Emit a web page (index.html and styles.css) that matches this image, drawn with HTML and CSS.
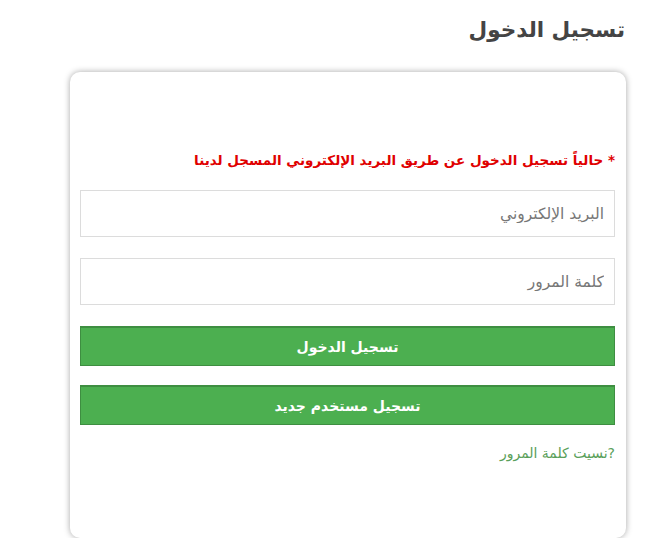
FILE: index.html
```html
<!DOCTYPE html>
<html lang="ar" dir="rtl">
<head>
    <meta charset="UTF-8">
    <meta name="viewport" content="width=device-width, initial-scale=1.0">
    <title>تسجيل الدخول</title>
    <link rel="stylesheet" href="styles.css">
</head>
<body>
    <div class="page">
        <h1 class="page-title">تسجيل الدخول</h1>
        <div class="login-box">
            <p class="notice">* حالياً تسجيل الدخول عن طريق البريد الإلكتروني المسجل لدينا</p>
            <form id="login-form" class="login-form">
                <input type="email" id="email" placeholder="البريد الإلكتروني">
                <input type="password" id="password" placeholder="كلمة المرور">
                <button type="submit">تسجيل الدخول</button>
                <button type="button">تسجيل مستخدم جديد</button>
            </form>
            <a href="#" class="forgot">?نسيت كلمة المرور</a>
        </div>
    </div>
</body>
</html>
```

FILE: styles.css
```css
body {
    margin: 0;
    background: #fff;
    font-family: "DejaVu Sans", "Noto Sans", sans-serif;
}

.page {
    width: 556px;
    margin-right: 44px;
    padding-top: 14px;
}

.page-title {
    margin: 0 1px 0 0;
    font-size: 21.5px;
    line-height: 32px;
    color: #444;
}

.login-box {
    margin-top: 26px;
    height: 466px;
    box-sizing: border-box;
    padding: 78px 11px 0 10px;
    background: #fff;
    border-radius: 10px;
    box-shadow: 0 0 6px rgba(0, 0, 0, 0.35);
}

.notice {
    margin: 0 0 20px;
    font-size: 13.5px;
    font-weight: bold;
    line-height: 20px;
    color: #e00000;
}

.login-form {
    display: flex;
    flex-direction: column;
}

input[type="email"],
input[type="password"] {
    height: 47px;
    box-sizing: border-box;
    margin-bottom: 21px;
    padding: 0 10px;
    border: 1px solid #dcdcdc;
    font-family: inherit;
    font-size: 15.5px;
    color: #555;
    direction: rtl;
}

input::placeholder {
    color: #777;
}

button {
    height: 40px;
    margin-bottom: 19px;
    background-color: #4CAF50;
    border: 1px solid #3e8e41;
    border-top-width: 2px;
    color: #fff;
    font-family: inherit;
    font-size: 14px;
    font-weight: bold;
    cursor: pointer;
}

button:hover {
    background-color: #45a049;
}

.forgot {
    display: block;
    margin-top: 1px;
    font-size: 14px;
    color: #5aa05a;
    text-decoration: none;
}
```
